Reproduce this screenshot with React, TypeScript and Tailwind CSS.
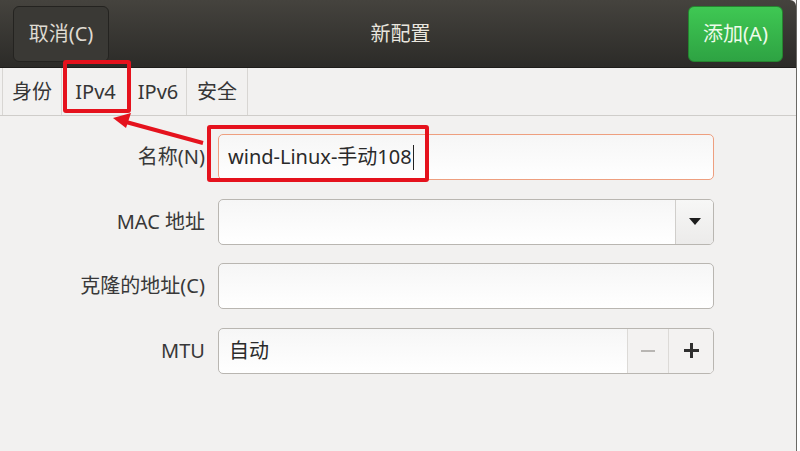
import { FC, ReactNode } from "react";

const font = { fontFamily: '"Noto Sans", "Noto Sans CJK SC", sans-serif' };

const tabs = ["身份", "IPv4", "IPv6", "安全"];

const Row: FC<{ label: string; children: ReactNode }> = ({ label, children }) => (
  <div className="flex items-center h-[46px]">
    <div className="w-[206px] pr-[1px] text-right text-[20px] text-[#383838]">{label}</div>
    <div className="ml-[12px] w-[496px] h-full">{children}</div>
  </div>
);

export default function App() {
  return (
    <div
      className="relative w-[800px] h-[451px] overflow-hidden bg-white"
      style={font}
    >
      <div className="flex flex-col w-[797px] h-full border-r border-[#6a6965] bg-[#f2f1f0]">
        {/* header bar */}
        <div className="h-[68px] flex items-center justify-between px-[13px] rounded-tr-[6px] bg-gradient-to-b from-[#45433e] to-[#2c2b28] border-b border-[#1e1d1b]">
          <button className="w-[96px] h-[56px] rounded-[6px] border border-[#242320] bg-[#3a3935] text-[20px] text-[#dfdbd2]">
            取消(C)
          </button>
          <div className="text-[20px] text-[#e9e6df] pl-[4px]">新配置</div>
          <button className="w-[95px] h-[56px] rounded-[6px] border border-[#25852f] bg-gradient-to-b from-[#3fc853] to-[#2ea343] text-[20px] text-[#eefbea]">
            添加(A)
          </button>
        </div>

        {/* tabs */}
        <div className="h-[48px] flex border-b border-[#cfcdca] pl-[2px]">
          {tabs.map((t, i) => (
            <div
              key={t}
              className={
                "h-full flex items-center justify-center text-[20px] text-[#363636] border-r border-[#d8d6d3] " +
                (i === 0 ? "w-[60px] border-l" : i === 1 ? "w-[68px]" : i === 2 ? "w-[57px]" : "w-[61px]")
              }
            >
              {t}
            </div>
          ))}
        </div>

        {/* form */}
        <div className="flex flex-col gap-[18.5px] pt-[18px]">
          <Row label="名称(N)">
            <div className="h-full flex items-center rounded-[5px] border border-[#ee9f7f] bg-gradient-to-b from-[#f6f6f6] to-white pl-[9px] text-[20px] text-[#2a2a2a]">
              wind-Linux-手动108
              <span className="ml-[1px] w-[1px] h-[25px] bg-[#222]" />
            </div>
          </Row>
          <Row label="MAC 地址">
            <div className="h-full flex rounded-[5px] border border-[#b9b6b1] bg-gradient-to-b from-[#f6f6f6] to-white overflow-hidden">
              <div className="flex-1" />
              <div className="w-[38px] flex items-center justify-center border-l border-[#d0cecb] bg-gradient-to-b from-[#f7f7f6] to-[#ecebea]">
                <svg width="12" height="7" viewBox="0 0 12 7">
                  <path d="M0 0h12L6 7z" fill="#1d1d1d" />
                </svg>
              </div>
            </div>
          </Row>
          <Row label="克隆的地址(C)">
            <div className="h-full rounded-[5px] border border-[#b9b6b1] bg-gradient-to-b from-[#f6f6f6] to-white" />
          </Row>
          <Row label="MTU">
            <div className="h-full flex rounded-[5px] border border-[#b9b6b1] bg-gradient-to-b from-[#f6f6f6] to-white overflow-hidden">
              <div className="flex-1 flex items-center pl-[10px] text-[20px] text-[#2a2a2a]">自动</div>
              <div className="w-[41px] flex items-center justify-center border-l border-[#dcdad7] bg-[#f3f2f1]">
                <svg width="14" height="2" viewBox="0 0 14 2">
                  <rect width="14" height="2" fill="#b8b6b3" />
                </svg>
              </div>
              <div className="w-[45px] flex items-center justify-center border-l border-[#dcdad7] bg-[#f3f2f1]">
                <svg width="15" height="15" viewBox="0 0 15 15">
                  <path d="M6 0h3v6h6v3H9v6H6V9H0V6h6z" fill="#2f2f2f" />
                </svg>
              </div>
            </div>
          </Row>
        </div>
      </div>

      {/* annotation overlay */}
      <div className="absolute left-[63px] top-[60px] w-[68px] h-[53px] border-[4px] border-[#e5121d] rounded-[3px]" />
      <div className="absolute left-[207px] top-[125px] w-[222px] h-[57px] border-[4px] border-[#e5121d] rounded-[3px]" />
      <svg className="absolute left-0 top-0" width="800" height="451" viewBox="0 0 800 451">
        <line x1="203" y1="143" x2="126" y2="122" stroke="#e5121d" strokeWidth="4" />
        <path d="M113 118 L131 113 L126 128 Z" fill="#e5121d" />
      </svg>
    </div>
  );
}
